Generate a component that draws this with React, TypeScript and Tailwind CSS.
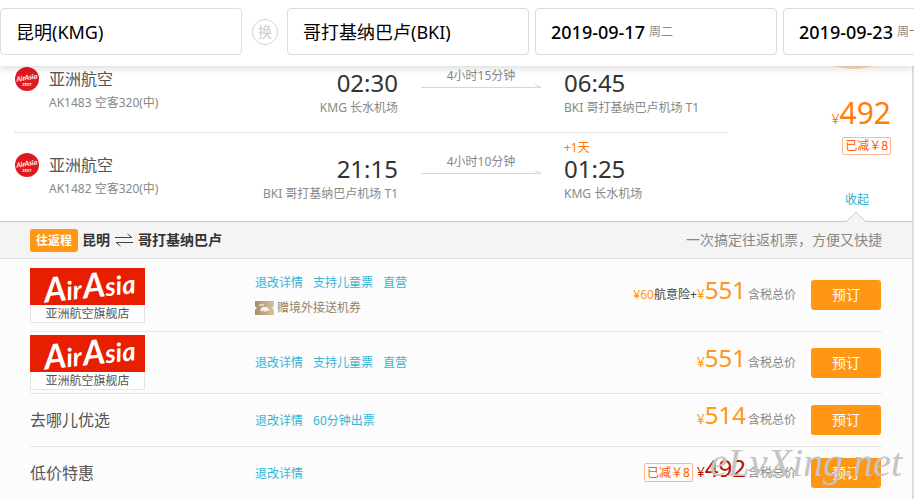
import type { ReactNode } from 'react';

interface Flight {
  no: string;
  depTime: string;
  depAirport: string;
  arrTime: string;
  arrAirport: string;
  duration: string;
  nextDay?: string;
}

interface Offer {
  id: number;
  store?: string;
  name?: string;
  links: string[];
  gift?: string;
  insurance?: string;
  discount?: string;
  price: number;
  lowest?: boolean;
  rowClass: string;
}

const flights: Flight[] = [
  {
    no: 'AK1483 空客320(中)',
    depTime: '02:30',
    depAirport: 'KMG 长水机场',
    arrTime: '06:45',
    arrAirport: 'BKI 哥打基纳巴卢机场 T1',
    duration: '4小时15分钟',
  },
  {
    no: 'AK1482 空客320(中)',
    depTime: '21:15',
    depAirport: 'BKI 哥打基纳巴卢机场 T1',
    arrTime: '01:25',
    arrAirport: 'KMG 长水机场',
    duration: '4小时10分钟',
    nextDay: '+1天',
  },
];

const offers: Offer[] = [
  {
    id: 1,
    store: '亚洲航空旗舰店',
    links: ['退改详情', '支持儿童票', '直营'],
    gift: '赠境外接送机券',
    insurance: '¥60',
    price: 551,
    rowClass: 'min-h-[73px]',
  },
  {
    id: 2,
    store: '亚洲航空旗舰店',
    links: ['退改详情', '支持儿童票', '直营'],
    price: 551,
    rowClass: 'min-h-[62px]',
  },
  { id: 3, name: '去哪儿优选', links: ['退改详情', '60分钟出票'], price: 514, rowClass: 'min-h-[53px]' },
  { id: 4, name: '低价特惠', links: ['退改详情'], discount: '已减￥8', price: 492, lowest: true, rowClass: 'min-h-[52px]' },
];

function Field({ children }: { children: ReactNode }) {
  return (
    <label className="flex h-[47px] w-[242px] shrink-0 items-center rounded border border-[#dcdcdc] bg-white px-[15px]">
      {children}
    </label>
  );
}

function DateField({ label, value, week }: { label: string; value: string; week: string }) {
  return (
    <Field>
      <input aria-label={label} defaultValue={value} className="w-24 text-lg font-medium text-black outline-none" />
      <span className="ml-0.5 shrink-0 text-xs text-[#888]">{week}</span>
    </Field>
  );
}

function SearchBar() {
  return (
    <header className="relative z-10 flex h-[66px] items-center overflow-x-clip bg-white pb-[3px] shadow-[0_2px_8px_rgba(0,0,0,0.15)]">
      <Field>
        <input aria-label="出发城市" defaultValue="昆明(KMG)" className="w-full text-lg text-black outline-none" />
      </Field>
      <button
        type="button"
        className="mr-[9px] ml-[10px] flex size-[26px] shrink-0 items-center justify-center rounded-full border border-[#d5d5d5] text-sm text-[#ccc]"
      >
        换
      </button>
      <Field>
        <input aria-label="到达城市" defaultValue="哥打基纳巴卢(BKI)" className="w-full text-lg text-black outline-none" />
      </Field>
      <div className="ml-1.5 flex gap-1.5">
        <DateField label="出发日期" value="2019-09-17" week="周二" />
        <DateField label="返回日期" value="2019-09-23" week="周一" />
      </div>
    </header>
  );
}

function AirlineBadge() {
  return (
    <svg viewBox="0 0 24 24" className="mt-px mr-[10px] size-6 shrink-0" aria-hidden="true">
      <circle cx="12" cy="12" r="12" fill="#e0191f" />
      <g fill="#fff" fontFamily="Lato, sans-serif" fontWeight="700" textAnchor="middle">
        <text x="12" y="13" fontSize="7" fontStyle="italic" transform="rotate(-9 12 12)">
          AirAsia
        </text>
        <text x="12" y="19" fontSize="4">
          ZEST
        </text>
      </g>
    </svg>
  );
}

function FlightRow({ flight, last }: { flight: Flight; last: boolean }) {
  return (
    <div className={last ? 'flex pt-[19px] pb-[18px]' : 'flex border-b border-dotted border-[#ccc] pb-[15px]'}>
      <div className="flex w-[210px]">
        <AirlineBadge />
        <div>
          <p className="text-base leading-[26px] text-[#555]">亚洲航空</p>
          <p className="text-xs leading-[22px] text-[#888]">{flight.no}</p>
        </div>
      </div>
      <div className="w-[173px] text-right">
        <p className="text-2xl leading-[33px] text-[#333]">{flight.depTime}</p>
        <p className="text-xs leading-[18px] text-[#888]">{flight.depAirport}</p>
      </div>
      <div className="mx-[23px] w-[120px]">
        <p className="text-center text-xs leading-5 text-[#888]">{flight.duration}</p>
        <svg viewBox="0 2 120 3" className="h-[3px] w-full overflow-visible" fill="none" stroke="#d5d5d5" aria-hidden="true">
          <path d="M0 3.5H120M114 0.5L120 3.5" />
        </svg>
      </div>
      <div className="relative flex-1">
        {flight.nextDay && (
          <span className="absolute -top-[14px] left-0 text-xs leading-5 text-[#ff7800]">{flight.nextDay}</span>
        )}
        <p className="text-2xl leading-[33px] text-[#333]">{flight.arrTime}</p>
        <p className="text-xs leading-[18px] text-[#888]">{flight.arrAirport}</p>
      </div>
    </div>
  );
}

function DiscountTag({ text }: { text: string }) {
  return (
    <span className="rounded-xs border border-[#ffb38f] px-0.5 text-xs leading-4 whitespace-nowrap text-[#ff5a00]">
      {text}
    </span>
  );
}

function FlightSummary() {
  return (
    <section className="relative flex border-b border-[#ccc] bg-white pl-[15px]">
      <div className="flex-1">
        {flights.map((flight, i) => (
          <FlightRow key={flight.no} flight={flight} last={i === flights.length - 1} />
        ))}
      </div>
      <div className="mr-[21px] flex w-[164px] flex-col items-end pt-8">
        <p className="leading-[30px] text-[#ff7d0a]">
          <span className="text-sm">¥</span>
          <span className="text-3xl leading-[30px]">492</span>
        </p>
        <div className="mt-1 flex">
          <DiscountTag text="已减￥8" />
        </div>
        <a href="#" className="mt-9 mr-[22px] text-xs leading-[18px] text-[#25b0d1]">
          收起
        </a>
      </div>
      <svg viewBox="0 0 44 4" className="absolute top-0 right-[36px] h-1 w-11" aria-hidden="true">
        <path d="M0 0H44L26 3H18Z" fill="#fbd9b5" />
      </svg>
      <svg viewBox="0 0 20 11" className="absolute right-[46px] -bottom-px h-[11px] w-5" aria-hidden="true">
        <path d="M0 11L1 10.5L10 1L19 10.5L20 11Z" fill="#f4f4f4" />
        <path d="M0.5 10.5L10 1L19.5 10.5" fill="none" stroke="#ccc" />
      </svg>
    </section>
  );
}

function TripBar() {
  return (
    <div className="flex h-[37px] items-center border-b border-[#ddd] bg-[#f4f4f4] px-[30px]">
      <span className="rounded-[3px] bg-[#ff9614] px-1.5 text-xs leading-[23px] font-bold text-white">往返程</span>
      <h2 className="ml-1 flex items-center text-sm font-bold text-[#333]">
        昆明
        <svg viewBox="0 0 18 14" className="mx-[5px] h-[14px] w-[18px]" fill="none" stroke="#444" aria-hidden="true">
          <path d="M0 4.5H17L12.5 1M18 9.5H1L5.5 13" />
        </svg>
        哥打基纳巴卢
      </h2>
      <p className="ml-auto text-sm text-[#888]">一次搞定往返机票，方便又快捷</p>
    </div>
  );
}

function StoreLogo({ name }: { name: string }) {
  return (
    <div className="w-[115px]">
      <svg viewBox="0 0 115 37" className="block h-[37px] w-full bg-[#e81e00]" aria-hidden="true">
        <g
          fill="#fff"
          fontFamily="Lato, sans-serif"
          fontSize="26"
          fontStyle="italic"
          fontWeight="700"
          transform="rotate(-6 58 20)"
        >
          <text x="14" y="30">
            <tspan fontSize="34">A</tspan>ir
          </text>
          <text x="53" y="30">
            <tspan fontSize="34">A</tspan>sia
          </text>
        </g>
      </svg>
      <p className="border border-t-0 border-[#e5e5e5] bg-white text-center text-xs leading-[17px] text-[#555]">{name}</p>
    </div>
  );
}

function CouponIcon() {
  return (
    <svg viewBox="0 0 19 14" className="h-[14px] w-[19px]" aria-hidden="true">
      <defs>
        <linearGradient id="coupon">
          <stop offset="0" stopColor="#a58d6d" />
          <stop offset="1" stopColor="#d6c49e" />
        </linearGradient>
      </defs>
      <path d="M0 0H19V5.5A1.5 1.5 0 0 0 19 8.5V14H0V8.5A1.5 1.5 0 0 0 0 5.5Z" fill="url(#coupon)" />
      <path d="M4 4.5L7 3.5L9 4.5" fill="none" stroke="#fff" />
      <path d="M5.5 8.5L7 6H11.5L14 8V10.5H6Z" fill="#fff" fillOpacity="0.85" />
      <circle cx="8" cy="10.5" r="1" fill="#b9a27e" />
      <circle cx="12.5" cy="10.5" r="1" fill="#b9a27e" />
    </svg>
  );
}

function OfferRow({ offer }: { offer: Offer }) {
  return (
    <li className={`flex items-center border-b border-[#e5e5e5] last:border-b-0 ${offer.rowClass}`}>
      <div className="w-[225px]">
        {offer.store ? <StoreLogo name={offer.store} /> : <h3 className="text-base text-[#555]">{offer.name}</h3>}
      </div>
      <div className="flex-1 text-xs leading-[25px]">
        <div className="flex gap-[10px]">
          {offer.links.map((link) => (
            <a key={link} href="#" className="text-[#35b5d5]">
              {link}
            </a>
          ))}
        </div>
        {offer.gift && (
          <p className="flex items-center gap-[3px] text-[#9a7f63]">
            <CouponIcon />
            {offer.gift}
          </p>
        )}
      </div>
      <div className="flex items-baseline pb-[10px] text-xs text-[#888]">
        {offer.insurance && (
          <span className="text-[#444]">
            <span className="text-[#ff9614]">{offer.insurance}</span>航意险+
          </span>
        )}
        {offer.discount && (
          <span className="mr-1">
            <DiscountTag text={offer.discount} />
          </span>
        )}
        <span className={offer.lowest ? 'text-[#b80c00]' : 'text-[#ff9614]'}>
          <span className="text-sm">¥</span>
          <span className="text-2xl">{offer.price}</span>
        </span>
        <span className="ml-0.5">含税总价</span>
      </div>
      <button type="button" className="mr-px ml-[15px] h-[30px] w-[70px] rounded-[3px] bg-[#ff9614] text-sm text-white">
        预订
      </button>
    </li>
  );
}

export default function App() {
  return (
    <div className="relative min-h-screen overflow-hidden bg-[#fcfcfc] font-['Noto_Sans','Noto_Sans_CJK_SC',sans-serif]">
      <SearchBar />
      <main className="border-r-2 border-[#ddd]">
        <FlightSummary />
        <TripBar />
        <ul className="px-[30px]">
          {offers.map((offer) => (
            <OfferRow key={offer.id} offer={offer} />
          ))}
        </ul>
      </main>
      <span className="pointer-events-none absolute right-3 bottom-4 font-['Liberation_Serif',serif] text-[40px] leading-10 text-[#c4c4c4] italic">
        eLvXing.net
      </span>
    </div>
  );
}
